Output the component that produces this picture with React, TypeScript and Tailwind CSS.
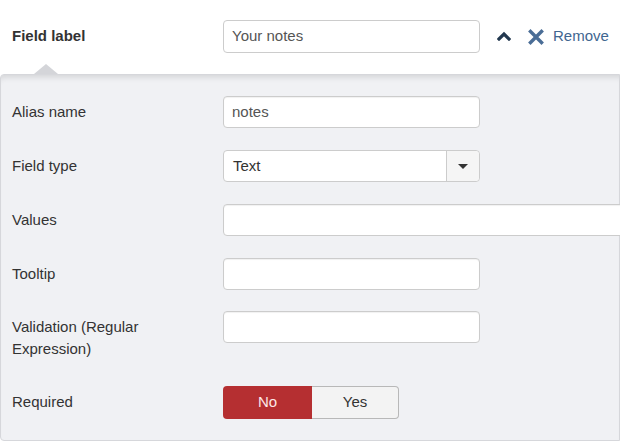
import React from 'react';

const font = { fontFamily: '"Liberation Sans", Arial, sans-serif' };

interface RowProps {
  label: string;
  children: React.ReactNode;
  className?: string;
}

const Row: React.FC<RowProps> = ({ label, children, className }) => (
  <div className={`flex items-start ${className ?? 'mb-[22px]'}`}>
    <label className="w-[222px] shrink-0 pl-[11px] pr-[30px] pt-[5px] leading-[22px] text-[15px] text-[#333]">
      {label}
    </label>
    {children}
  </div>
);

const TextInput: React.FC<{ value?: string; width?: string }> = ({ value = '', width = 'w-[257px]' }) => (
  <div
    className={`${width} h-[32px] shrink-0 flex items-center rounded-[4px] border border-[#cccccc] bg-white px-[8px] text-[15px] text-[#555] shadow-[inset_0_1px_1px_rgba(0,0,0,0.06)]`}
  >
    {value}
  </div>
);

export default function App() {
  return (
    <div className="w-[620px] h-[444px] overflow-hidden bg-white" style={font}>
      {/* header row */}
      <div className="flex items-center pt-[20px]">
        <div className="w-[223px] shrink-0 pl-[12px] text-[15px] font-bold text-[#333]">Field label</div>
        <div className="w-[257px] h-[33px] shrink-0 flex items-center rounded-[4px] border border-[#cccccc] bg-white px-[8px] text-[15px] text-[#555]">
          Your notes
        </div>
        <svg className="ml-[17px] mb-[2px]" width="14" height="10" viewBox="0 0 14 10">
          <polyline points="2,8 7,3 12,8" fill="none" stroke="#22384f" strokeWidth="3.2" strokeLinecap="square" />
        </svg>
        <svg className="ml-[17px]" width="16" height="16" viewBox="0 0 16 16">
          <path d="M2.5 2.5 L13.5 13.5 M13.5 2.5 L2.5 13.5" stroke="#4a6d96" strokeWidth="3.4" strokeLinecap="square" />
        </svg>
        <span className="ml-[9px] text-[15px] text-[#3f6690]">Remove</span>
      </div>

      {/* options panel */}
      <div className="relative mt-[21px] rounded-l-[4px] border border-[#d6d7db] bg-[#f0f1f4] pt-[21px] pb-[21px] shadow-[inset_0_7px_6px_-5px_rgba(0,0,0,0.13)]">
        <div className="absolute left-[33px] top-[-11px] h-0 w-0 border-x-[12px] border-b-[10px] border-x-transparent border-b-[#d4d5d9]" />

        <Row label="Alias name">
          <TextInput value="notes" />
        </Row>

        <Row label="Field type">
          <div className="w-[257px] h-[32px] shrink-0 flex rounded-[4px] border border-[#cccccc] bg-white text-[15px] text-[#333]">
            <div className="flex-1 flex items-center px-[9px]">Text</div>
            <div className="w-[33px] flex items-center justify-center border-l border-[#cccccc] bg-[#f5f5f5] rounded-r-[4px]">
              <div className="h-0 w-0 border-x-[5px] border-t-[5px] border-x-transparent border-t-[#333]" />
            </div>
          </div>
        </Row>

        <Row label="Values">
          <TextInput width="w-[420px]" />
        </Row>

        <Row label="Tooltip" className="mb-[21px]">
          <TextInput />
        </Row>

        <Row label="Validation (Regular Expression)" className="mb-[26px]">
          <TextInput />
        </Row>

        <Row label="Required" className="">
          <div className="flex h-[33px] text-[15px]">
            <div className="w-[89px] flex items-center justify-center rounded-l-[4px] bg-[#b52f31] text-[#fde8e8]">
              No
            </div>
            <div className="w-[87px] flex items-center justify-center rounded-r-[4px] border border-[#b8b8b8] border-l-0 bg-[#f3f3f3] text-[#333]">
              Yes
            </div>
          </div>
        </Row>
      </div>
    </div>
  );
}
